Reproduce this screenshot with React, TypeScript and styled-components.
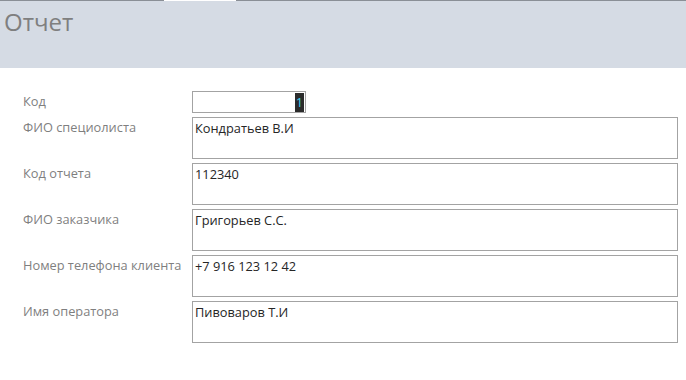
import React, { FC } from 'react';
import styled, { createGlobalStyle } from 'styled-components';

const GlobalStyle = createGlobalStyle`
  html, body {
    margin: 0;
    padding: 0;
    background: #ffffff;
  }
  body {
    font-family: "Open Sans", "Liberation Sans", sans-serif;
  }
`;

const Page = styled.div`
  width: 686px;
  height: 380px;
  background: #ffffff;
  overflow: hidden;
`;

const TopLine = styled.div`
  display: flex;
  height: 1px;
`;

const LineSegment = styled.div<{ $w?: number; $gap?: boolean }>`
  ${(p) => (p.$w ? `width: ${p.$w}px;` : 'flex: 1;')}
  background: ${(p) => (p.$gap ? '#ffffff' : '#8a8f96')};
`;

const Header = styled.div`
  height: 67px;
  background: #d5dbe4;
  padding: 5px 0 0 4px;
  box-sizing: border-box;
`;

const Title = styled.h1`
  margin: 0;
  font-size: 24px;
  font-weight: 400;
  color: #7f7f7f;
  line-height: 32px;
`;

const Form = styled.div`
  display: grid;
  grid-template-columns: 169px 486px;
  row-gap: 4px;
  padding: 23px 0 0 23px;
`;

const Label = styled.div`
  font-size: 12.8px;
  color: #7f7f7f;
  line-height: 16px;
  padding-top: 2px;
  white-space: nowrap;
`;

const Field = styled.div<{ $short?: boolean }>`
  box-sizing: border-box;
  width: ${(p) => (p.$short ? '114px' : '486px')};
  height: ${(p) => (p.$short ? '22px' : '42px')};
  border: 1px solid #a3a3a3;
  padding: 2px 2px 0 2px;
  font-size: 12.8px;
  line-height: 16px;
  color: #262626;
  display: flex;
  justify-content: ${(p) => (p.$short ? 'flex-end' : 'flex-start')};
  align-items: flex-start;
`;

const Selected = styled.span`
  display: inline-block;
  background: #2b2b2b;
  color: #3fd0f0;
  height: 19px;
  line-height: 19px;
  padding: 0 1px;
  margin-top: -1px;
  margin-right: -1px;
`;

const rows = [
  { label: 'ФИО специолиста', value: 'Кондратьев В.И' },
  { label: 'Код отчета', value: '112340' },
  { label: 'ФИО заказчика', value: 'Григорьев С.С.' },
  { label: 'Номер телефона клиента', value: '+7 916 123 12 42' },
  { label: 'Имя оператора', value: 'Пивоваров Т.И' },
];

const App: FC = () => {
  return (
    <>
      <GlobalStyle />
      <Page>
        <TopLine>
          <LineSegment $w={164} />
          <LineSegment $w={72} $gap />
          <LineSegment />
        </TopLine>
        <Header>
          <Title>Отчет</Title>
        </Header>
        <Form>
          <Label>Код</Label>
          <Field $short>
            <Selected>1</Selected>
          </Field>
          {rows.map((r) => (
            <React.Fragment key={r.label}>
              <Label>{r.label}</Label>
              <Field>{r.value}</Field>
            </React.Fragment>
          ))}
        </Form>
      </Page>
    </>
  );
};

export default App;
